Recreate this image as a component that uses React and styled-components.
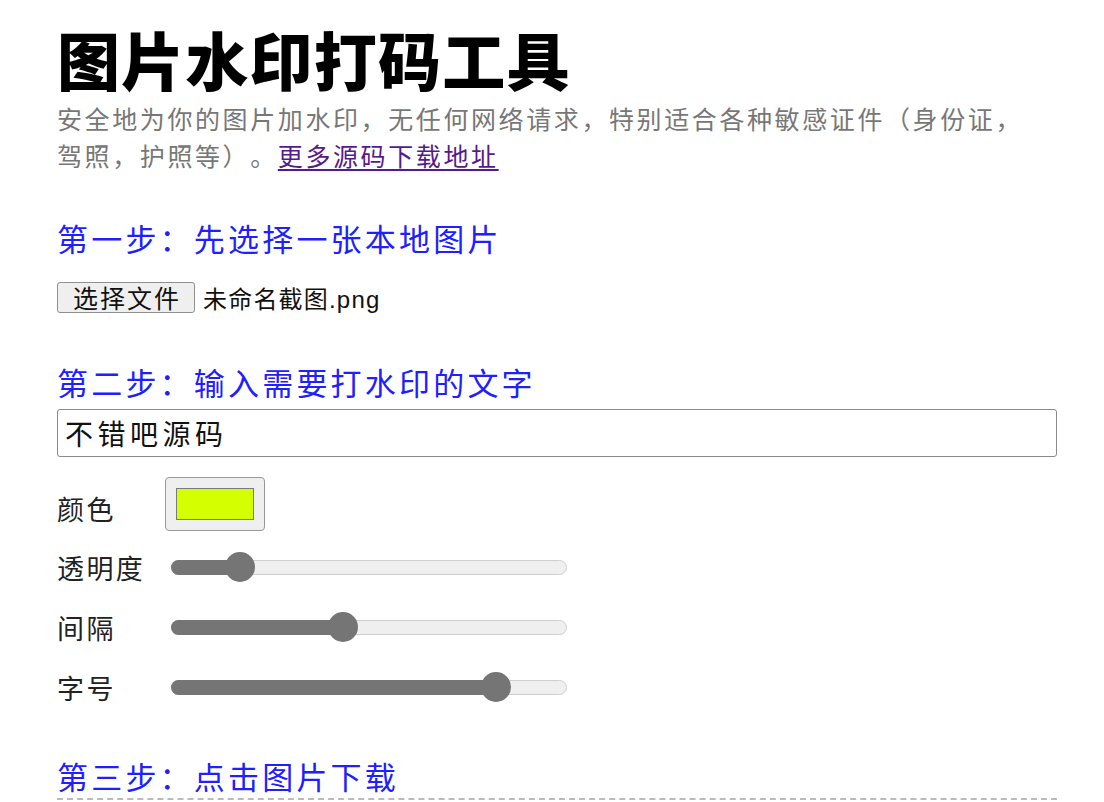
import React from 'react';
import styled, { createGlobalStyle } from 'styled-components';

const GlobalStyle = createGlobalStyle`
  html, body {
    margin: 0;
    padding: 0;
    background: #ffffff;
  }
  body {
    font-family: "Noto Sans CJK SC", "Liberation Sans", sans-serif;
    color: #222;
    text-spacing-trim: space-all;
  }
`;

const Page = styled.div`
  width: 1000px;
  padding: 22px 0 0 57px;
`;

const Title = styled.h1`
  margin: 0;
  font-size: 63px;
  line-height: 72px;
  font-weight: 900;
  color: #000;
  letter-spacing: 1.2px;
`;

const Intro = styled.p`
  max-width: 980px;
  margin: 6px 0 0;
  font-size: 25px;
  line-height: 37px;
  letter-spacing: 2.6px;
  color: #777;
  text-spacing-trim: space-all;
`;

const MoreLink = styled.a`
  color: #551a8b;
  text-decoration: underline;
  text-underline-offset: 3px;
  letter-spacing: 2.6px;
`;

const StepTitle = styled.h2`
  margin: ${({ top }) => top}px 0 0;
  font-size: 31px;
  line-height: 40px;
  font-weight: 400;
  color: #2020ff;
  letter-spacing: 3.2px;
  padding-bottom: ${({ dashed }) => (dashed ? '2px' : '0')};
  border-bottom: ${({ dashed }) => (dashed ? '2px dashed #bbbbbb' : 'none')};
`;

const FileRow = styled.div`
  display: flex;
  align-items: center;
  gap: 8px;
  margin-top: 22px;
`;

const FileButton = styled.button`
  height: 31px;
  width: 138px;
  padding: 0;
  border: 1px solid #8f8f8f;
  border-radius: 3px;
  background: #efefef;
  font-family: "Noto Sans CJK SC", sans-serif;
  font-size: 25px;
  letter-spacing: 2px;
  text-indent: 2px;
  color: #111;
  line-height: 29px;
`;

const FileName = styled.span`
  font-family: "Liberation Sans", "Noto Sans CJK SC", sans-serif;
  font-size: 24px;
  letter-spacing: 1.2px;
  color: #111;
`;

const TextInput = styled.input`
  display: block;
  box-sizing: border-box;
  width: 1000px;
  height: 48px;
  margin-top: 7px;
  padding: 0 7px;
  border: 1px solid #8a8a8a;
  border-radius: 3px;
  font-family: "Noto Sans CJK SC", sans-serif;
  font-size: 28px;
  letter-spacing: 4.5px;
  color: #111;
  outline: none;
`;

const Row = styled.div`
  display: flex;
  align-items: center;
  height: ${({ h }) => h}px;
  margin-top: ${({ top }) => top}px;
`;

const Label = styled.span`
  width: ${({ w }) => w}px;
  flex: none;
  font-size: 27px;
  letter-spacing: 2.4px;
  color: #222;
  position: relative;
  top: ${({ dy }) => dy || 0}px;
`;

const ColorBox = styled.div`
  box-sizing: border-box;
  width: 100px;
  height: 54px;
  padding: 10px 10px;
  border: 1px solid #999;
  border-radius: 4px;
  background: #efefef;
  display: flex;
`;

const Swatch = styled.div`
  flex: 1;
  border: 1px solid #7a7a7a;
  background: ${({ color }) => color};
`;

const Track = styled.div`
  position: relative;
  box-sizing: border-box;
  width: 396px;
  height: 15px;
  border: 1px solid #cfcfcf;
  border-radius: 8px;
  background: #efefef;
`;

const Fill = styled.div`
  position: absolute;
  left: -1px;
  top: -1px;
  bottom: -1px;
  border-radius: 8px;
  background: #757575;
`;

const Thumb = styled.div`
  position: absolute;
  top: 50%;
  width: 30px;
  height: 30px;
  border-radius: 50%;
  background: #757575;
  transform: translate(-50%, -50%);
`;

const Slider = ({ value }) => {
  const center = 14 + value * 368;
  return (
    <Track>
      <Fill style={{ width: `${center + 1}px` }} />
      <Thumb style={{ left: `${center - 1}px` }} />
    </Track>
  );
};

const sliders = [
  { label: '透明度', value: 0.15, top: 16 },
  { label: '间隔', value: 0.43, top: 20 },
  { label: '字号', value: 0.845, top: 20 },
];

export default function App() {
  return (
    <>
      <GlobalStyle />
      <Page>
        <Title>图片水印打码工具</Title>
        <Intro>
          安全地为你的图片加水印，无任何网络请求，特别适合各种敏感证件（身份证，驾照，护照等）。
          <MoreLink href="#">更多源码下载地址</MoreLink>
        </Intro>

        <StepTitle top={44}>第一步：先选择一张本地图片</StepTitle>
        <FileRow>
          <FileButton type="button">选择文件</FileButton>
          <FileName>未命名截图.png</FileName>
        </FileRow>

        <StepTitle top={47}>第二步：输入需要打水印的文字</StepTitle>
        <TextInput defaultValue="不错吧源码" />

        <Row h={54} top={20}>
          <Label w={108} dy={4}>颜色</Label>
          <ColorBox>
            <Swatch color="#d4ff00" />
          </ColorBox>
        </Row>

        {sliders.map((s) => (
          <Row key={s.label} h={40} top={s.top}>
            <Label w={114}>{s.label}</Label>
            <Slider value={s.value} />
          </Row>
        ))}

        <StepTitle top={49} dashed>第三步：点击图片下载</StepTitle>
      </Page>
    </>
  );
}
